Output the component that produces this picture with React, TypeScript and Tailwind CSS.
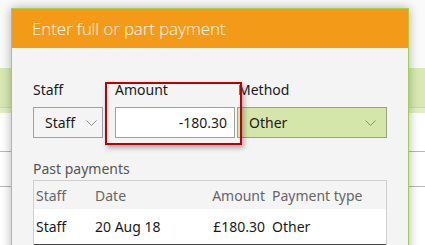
const font = { fontFamily: '"Noto Sans", "Open Sans", sans-serif' };

function Chevron() {
  return (
    <svg width="11" height="6" viewBox="0 0 11 6" fill="none" className="shrink-0">
      <path d="M0.5 0.5 L5.5 5.5 L10.5 0.5" stroke="#8a8a8a" strokeWidth="1" />
    </svg>
  );
}

export default function App() {
  return (
    <div
      className="relative w-[425px] h-[245px] overflow-hidden bg-[#fafafa] text-[#1a1a1a]"
      style={font}
    >
      {/* page behind the dialog */}
      <div className="flex flex-col">
        <div className="h-[68px]" />
        <div className="h-[39px] bg-[#d8e9b4]" />
        <div className="h-[6px] bg-[#e2efc6] border-t border-[#c9d8aa]" />
        <div className="h-[39px] bg-white border-b border-[#b8b8b8]" />
        <div className="h-[35px] bg-white border-b border-[#b8b8b8]" />
        <div className="h-[60px] bg-white" />
      </div>

      {/* dialog */}
      <div className="absolute left-[11px] top-[8px] w-[398px] h-[260px] border border-[#a3cf4f] bg-[#f4f4f4] shadow-[0_0_10px_rgba(0,0,0,0.3)]">
        <div className="h-[39px] bg-[#f39a19] pl-[20px] flex items-center">
          <span className="text-[17px] font-light text-[#fdf1e0] tracking-[-0.2px]">
            Enter full or part payment
          </span>
        </div>

        <div className="px-[21px] pt-[32px]">
          <div className="flex items-start text-[14px]">
            <div className="flex flex-col w-[70px]">
              <span className="h-[27px] leading-[20px]">Staff</span>
              <div className="h-[31px] border border-[#a0a0a0] bg-[#f4f4f4] flex items-center justify-between pl-[11px] pr-[5px]">
                <span>Staff</span>
                <Chevron />
              </div>
            </div>
            <div className="relative flex flex-col w-[120px] ml-[12px]">
              <span className="h-[27px] leading-[20px]">Amount</span>
              <div className="h-[31px] border border-[#a0a0a0] bg-white flex items-center justify-end pr-[7px]">
                <span>-180.30</span>
              </div>
              <div className="absolute left-[-10px] top-[2px] w-[137px] h-[63px] border-2 border-[#c00000] shadow-[2px_3px_5px_rgba(0,0,0,0.3)]" />
            </div>
            <div className="flex flex-col w-[150px] ml-[2px]">
              <span className="h-[27px] leading-[20px] pl-[1px]">Method</span>
              <div className="h-[31px] border border-[#9aa08c] bg-[#d5e6aa] flex items-center justify-between pl-[11px] pr-[10px]">
                <span>Other</span>
                <Chevron />
              </div>
            </div>
          </div>

          <div className="mt-[21px] text-[14px] text-[#555] leading-[20px]">Past payments</div>
          <div className="mt-[1px] w-[354px] border border-[#cfcfcf] border-b-0 text-[14px]">
            <div className="h-[28px] flex items-center text-[#666]">
              <span className="w-[61px] pl-[2px]">Staff</span>
              <span className="w-[115px]">Date</span>
              <span className="w-[55px] text-right">Amount</span>
              <span className="pl-[7px]">Payment type</span>
            </div>
            <div className="h-[36px] flex items-center bg-white border-b border-[#444]">
              <span className="w-[61px] pl-[2px]">Staff</span>
              <span className="w-[115px]">20 Aug 18</span>
              <span className="w-[55px] text-right">£180.30</span>
              <span className="pl-[7px]">Other</span>
            </div>
          </div>
        </div>
      </div>
    </div>
  );
}
